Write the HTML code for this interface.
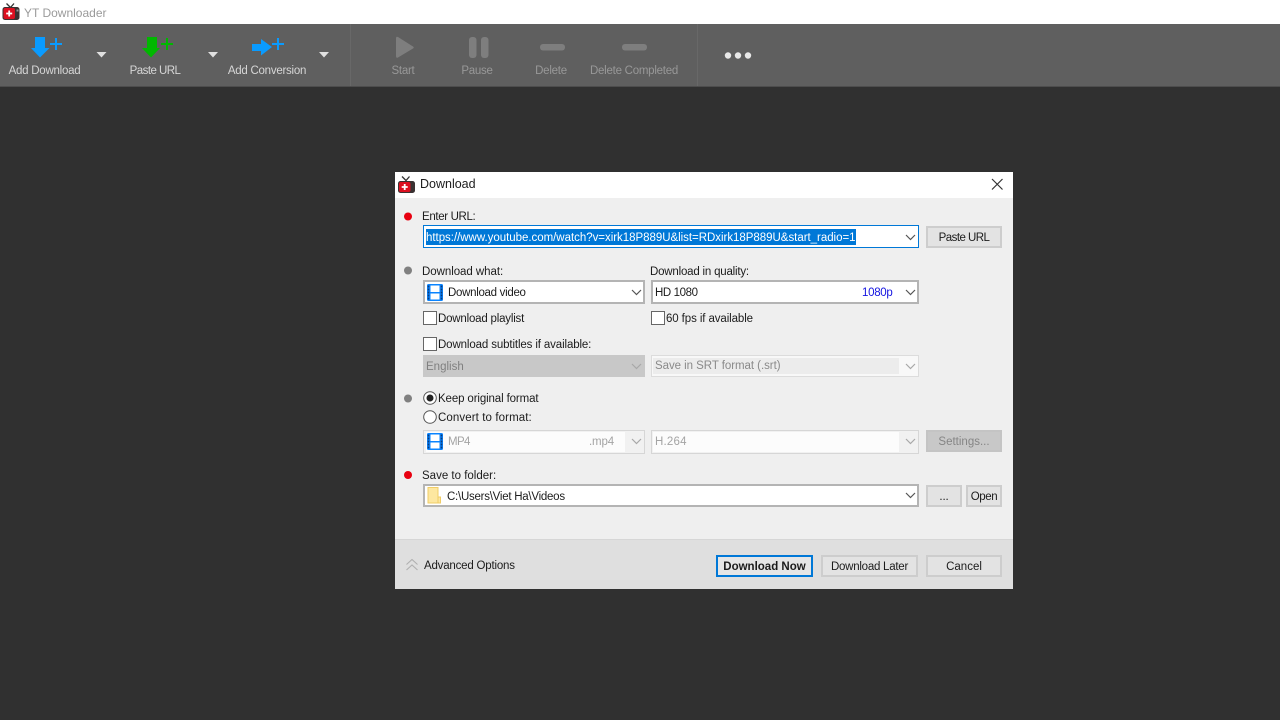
<!DOCTYPE html>
<html><head><meta charset="utf-8"><style>
html,body{margin:0;padding:0;width:1280px;height:720px;overflow:hidden;background:#303030}
body{font-family:"Liberation Sans",sans-serif;font-size:11.5px;color:#1c1c1c}
#r{position:absolute;left:0;top:0;width:1280px;height:720px;filter:blur(.3px);letter-spacing:-.15px}
.a{position:absolute;box-sizing:border-box}
.t{position:absolute;white-space:nowrap;line-height:14px}
.tb{color:#d6d6d6;text-align:center;letter-spacing:-.25px}
.dis{color:#989898;text-align:center;letter-spacing:-.25px}
.btn{position:absolute;box-sizing:border-box;border:2px solid #cdcdcd;background:#e3e3e3;text-align:center;line-height:20px;white-space:nowrap}
.cb{position:absolute;box-sizing:border-box;width:14px;height:14px;background:#fff;border:1px solid #666}
.combo{position:absolute;box-sizing:border-box;background:#fff;border:2px solid #b4b4b4}
svg{position:absolute;display:block}
</style></head><body><div id="r">
<div class="a" style="left:0;top:0;width:1280px;height:24px;background:#fff"></div>
<svg style="left:2px;top:3px" width="18" height="17" viewBox="0 0 18 17"><path d="M4.500 .500L8.500 4.500 12 .500" fill="none" stroke="#333" stroke-width="1.300"/><rect x="0.500" y="4" width="17" height="13" rx="2.500" fill="#3a3232"/><rect x="1.500" y="5" width="11.500" height="11" rx="2" fill="#dc1020"/><path d="M7.200 7.500v6M4.200 10.500h6" stroke="#fff" stroke-width="1.800"/><rect x="14.500" y="6.500" width="2" height="2" fill="#999"/></svg>
<div class="t" style="left:24px;top:6px;color:#9a9a9a;font-size:12px;letter-spacing:0">YT Downloader</div>

<div class="a" style="left:0;top:24px;width:1280px;height:63px;background:#5f5f5f;border-bottom:1px solid #4d4d4d"></div>
<div class="a" style="left:350px;top:24px;width:1px;height:62px;background:#686868"></div>
<div class="a" style="left:697px;top:24px;width:1px;height:62px;background:#686868"></div>

<svg style="left:0;top:30px" width="350" height="32" viewBox="0 0 350 32">
<path d="M35 7h10v11h4.500L40 27.500 31 18h4z" fill="#0a9bff"/><path d="M56 8v12M50 14h12" stroke="#0a9bff" stroke-width="2"/>
<path d="M147 7h10v11h3L151 27.500 142 18h5z" fill="#00b800"/><path d="M167 8v12M161 14h12" stroke="#00b800" stroke-width="2"/>
<path d="M252 14h9V9l11 8-11 8.500V21h-9z" fill="#0a9bff"/><path d="M278 8v12M272 14h12" stroke="#0a9bff" stroke-width="2"/>
<path d="M96.500 22h10l-5 5.500z M208 22h10l-5 5.500z M319 22h10l-5 5.500z" fill="#e0e0e0"/>
</svg>
<div class="t tb" style="left:0;top:64px;width:89px">Add Download</div>
<div class="t tb" style="left:115px;top:64px;width:80px;letter-spacing:-.55px">Paste URL</div>
<div class="t tb" style="left:217px;top:64px;width:100px">Add Conversion</div>

<svg style="left:380px;top:30px" width="390" height="32" viewBox="0 0 390 32">
<path d="M16 8.500q0-2.500 2-1.500l15 9.500q1.500 1 0 2L18 27.500q-2 1-2-1.500z" fill="#7e7e7e"/>
<rect x="89" y="7" width="7.500" height="21" rx="3" fill="#7e7e7e"/><rect x="101" y="7" width="7.500" height="21" rx="3" fill="#7e7e7e"/>
<rect x="160" y="14" width="25" height="6.500" rx="3" fill="#7e7e7e"/><rect x="242" y="14" width="25" height="6.500" rx="3" fill="#7e7e7e"/>
<circle cx="348" cy="25.500" r="3.200" fill="#e8e8e8"/><circle cx="358" cy="25.500" r="3.200" fill="#e8e8e8"/><circle cx="368" cy="25.500" r="3.200" fill="#e8e8e8"/>
</svg>
<div class="t dis" style="left:363px;top:64px;width:80px">Start</div>
<div class="t dis" style="left:437px;top:64px;width:80px">Pause</div>
<div class="t dis" style="left:511px;top:64px;width:80px">Delete</div>
<div class="t dis" style="left:574px;top:64px;width:120px">Delete Completed</div>

<!-- dialog -->
<div class="a" style="left:395px;top:172px;width:618px;height:417px;background:#efefef"></div>
<div class="a" style="left:395px;top:172px;width:618px;height:26px;background:#fff"></div>
<div class="a" style="left:395px;top:539px;width:618px;height:50px;background:#dfdfdf;border-top:1px solid #d6d6d6"></div>
<svg style="left:398px;top:176px" width="17" height="17" viewBox="0 0 17 17"><path d="M4 .500L8 4.500 11.500 .500" fill="none" stroke="#333" stroke-width="1.300"/><rect x="0" y="5" width="17" height="12" rx="2.500" fill="#3a3232"/><rect x="1" y="6" width="11.500" height="10" rx="2" fill="#dc1020"/><path d="M6.700 8v6M3.700 11h6" stroke="#fff" stroke-width="1.800"/></svg>
<div class="t" style="left:420px;top:177px;font-size:12.500px;letter-spacing:0">Download</div>
<svg style="left:991px;top:178px" width="13" height="13" viewBox="0 0 13 13"><path d="M1 1l10.500 10.500M11.500 1L1 11.500" stroke="#333" stroke-width="1.200" fill="none"/></svg>

<svg style="left:400px;top:205px" width="16" height="280" viewBox="0 0 16 280">
<circle cx="8" cy="11.500" r="4" fill="#e80010"/><circle cx="8" cy="65.500" r="4" fill="#808080"/><circle cx="8" cy="193.500" r="4" fill="#808080"/><circle cx="8" cy="270" r="4" fill="#e80010"/></svg>

<div class="t" style="left:422px;top:210px;letter-spacing:-.35px">Enter URL:</div>
<div class="combo" style="left:423px;top:225px;width:496px;height:23px;border:1px solid #0078d7"></div>
<div class="a" style="left:426px;top:229px;width:430px;height:16px;background:#0078d7"></div>
<div class="t" style="left:426px;top:231px;color:#fff;letter-spacing:-.03px">https://www.youtube.com/watch?v=xirk18P889U&amp;list=RDxirk18P889U&amp;start_radio=1</div>
<svg style="left:905px;top:234px" width="11" height="7" viewBox="0 0 11 7"><path d="M1 1l4.500 4.500L10 1" fill="none" stroke="#555" stroke-width="1.200"/></svg>
<div class="btn" style="left:926px;top:226px;width:76px;height:22px;letter-spacing:-.55px">Paste URL</div>

<div class="t" style="left:422px;top:265px;letter-spacing:-.05px">Download what:</div>
<div class="t" style="left:650px;top:265px;letter-spacing:-.2px">Download in quality:</div>
<div class="combo" style="left:423px;top:280px;width:222px;height:24px"></div>
<svg style="left:427px;top:284px" width="16" height="17" viewBox="0 0 16 17"><rect width="16" height="17" rx="1.500" fill="#0a84ff"/><rect x="3.500" y="1.500" width="9" height="6.500" fill="#fff"/><rect x="3.500" y="9.500" width="9" height="6" fill="#fff"/><path d="M1.500 1.500v14M14.500 1.500v14" stroke="#0b3a78" stroke-width="1.600" stroke-dasharray="2 1"/></svg>
<div class="t" style="left:448px;top:286px;letter-spacing:-.3px">Download video</div>
<svg style="left:631px;top:289px" width="11" height="7" viewBox="0 0 11 7"><path d="M1 1l4.500 4.500L10 1" fill="none" stroke="#555" stroke-width="1.200"/></svg>
<div class="combo" style="left:651px;top:280px;width:268px;height:24px"></div>
<div class="t" style="left:655px;top:286px;letter-spacing:-.4px">HD 1080</div>
<div class="t" style="left:862px;top:286px;color:#1414e0;letter-spacing:-.3px">1080p</div>
<svg style="left:905px;top:289px" width="11" height="7" viewBox="0 0 11 7"><path d="M1 1l4.500 4.500L10 1" fill="none" stroke="#555" stroke-width="1.200"/></svg>

<div class="cb" style="left:423px;top:311px"></div>
<div class="t" style="left:438px;top:312px;letter-spacing:-.2px">Download playlist</div>
<div class="cb" style="left:651px;top:311px"></div>
<div class="t" style="left:666px;top:312px;letter-spacing:-.1px">60 fps if available</div>
<div class="cb" style="left:423px;top:337px"></div>
<div class="t" style="left:438px;top:338px;letter-spacing:-.125px">Download subtitles if available:</div>

<div class="a" style="left:423px;top:355px;width:222px;height:22px;background:#c8c8c8"></div>
<div class="t" style="left:426px;top:360px;color:#808080;letter-spacing:0">English</div>
<svg style="left:631px;top:363px" width="11" height="7" viewBox="0 0 11 7"><path d="M1 1l4.500 4.500L10 1" fill="none" stroke="#a8a8a8" stroke-width="1.200"/></svg>
<div class="a" style="left:651px;top:355px;width:268px;height:22px;background:#f8f8f8;border:1px solid #dcdcdc"></div>
<div class="a" style="left:653px;top:358px;width:246px;height:16px;background:#ececec"></div>
<div class="t" style="left:655px;top:359px;color:#8a8a8a;letter-spacing:-.05px">Save in SRT format (.srt)</div>
<svg style="left:905px;top:363px" width="11" height="7" viewBox="0 0 11 7"><path d="M1 1l4.500 4.500L10 1" fill="none" stroke="#a8a8a8" stroke-width="1.200"/></svg>

<svg style="left:422px;top:390px" width="16" height="36" viewBox="0 0 16 36"><circle cx="8" cy="8" r="6.300" fill="#fff" stroke="#555"/><circle cx="8" cy="8" r="3.500" fill="#222"/><circle cx="8" cy="27" r="6.300" fill="#fff" stroke="#555"/></svg>
<div class="t" style="left:438px;top:392px;letter-spacing:-.125px">Keep original format</div>
<div class="t" style="left:438px;top:411px;letter-spacing:.1px">Convert to format:</div>

<div class="a" style="left:423px;top:430px;width:222px;height:24px;background:#f1f1f1;border:1px solid #d6d6d6"></div>
<div class="a" style="left:426px;top:432px;width:199px;height:20px;background:#fcfcfc"></div>
<svg style="left:427px;top:433px" width="16" height="17" viewBox="0 0 16 17"><rect width="16" height="17" rx="1.500" fill="#0a84ff"/><rect x="3.500" y="1.500" width="9" height="6.500" fill="#fff"/><rect x="3.500" y="9.500" width="9" height="6" fill="#fff"/><path d="M1.500 1.500v14M14.500 1.500v14" stroke="#0b3a78" stroke-width="1.600" stroke-dasharray="2 1"/></svg>
<div class="t" style="left:448px;top:435px;color:#a4a4a4;letter-spacing:-.6px">MP4</div>
<div class="t" style="left:589px;top:435px;color:#a4a4a4">.mp4</div>
<svg style="left:631px;top:438px" width="11" height="7" viewBox="0 0 11 7"><path d="M1 1l4.500 4.500L10 1" fill="none" stroke="#a8a8a8" stroke-width="1.200"/></svg>
<div class="a" style="left:651px;top:430px;width:268px;height:24px;background:#f1f1f1;border:1px solid #d6d6d6"></div>
<div class="a" style="left:653px;top:432px;width:246px;height:20px;background:#fcfcfc"></div>
<div class="t" style="left:655px;top:435px;color:#a4a4a4;letter-spacing:.2px">H.264</div>
<svg style="left:905px;top:438px" width="11" height="7" viewBox="0 0 11 7"><path d="M1 1l4.500 4.500L10 1" fill="none" stroke="#a8a8a8" stroke-width="1.200"/></svg>
<div class="btn" style="left:926px;top:430px;width:76px;height:22px;background:#c8c8c8;border-color:#c4c4c4;color:#858585;letter-spacing:0">Settings...</div>

<div class="t" style="left:422px;top:469px;letter-spacing:0">Save to folder:</div>
<div class="combo" style="left:423px;top:484px;width:496px;height:23px"></div>
<svg style="left:427px;top:487px" width="15" height="17" viewBox="0 0 15 17"><rect x="1" y=".500" width="10" height="15.500" fill="#fde7a0" stroke="#f0cc66"/><rect x="11" y="10" width="2.500" height="6" fill="#fde7a0" stroke="#f0cc66"/></svg>
<div class="t" style="left:447px;top:490px;letter-spacing:-.25px">C:\Users\Viet Ha\Videos</div>
<svg style="left:905px;top:492px" width="11" height="7" viewBox="0 0 11 7"><path d="M1 1l4.500 4.500L10 1" fill="none" stroke="#555" stroke-width="1.200"/></svg>
<div class="btn" style="left:926px;top:485px;width:36px;height:22px">...</div>
<div class="btn" style="left:966px;top:485px;width:36px;height:22px;letter-spacing:-.4px">Open</div>

<svg style="left:405px;top:558px" width="14" height="14" viewBox="0 0 14 14"><path d="M1.500 6.500L7 1.500l5.500 5M1.500 12L7 7l5.500 5" fill="none" stroke="#b0b0b0" stroke-width="1.100"/></svg>
<div class="t" style="left:424px;top:559px;letter-spacing:-.2px">Advanced Options</div>
<div class="btn" style="left:716px;top:555px;width:97px;height:22px;border-color:#0078d7;font-weight:bold;background:#e6e6e6;letter-spacing:0">Download Now</div>
<div class="btn" style="left:821px;top:555px;width:97px;height:22px;letter-spacing:-.25px">Download Later</div>
<div class="btn" style="left:926px;top:555px;width:76px;height:22px;letter-spacing:0">Cancel</div>
</div></body></html>
